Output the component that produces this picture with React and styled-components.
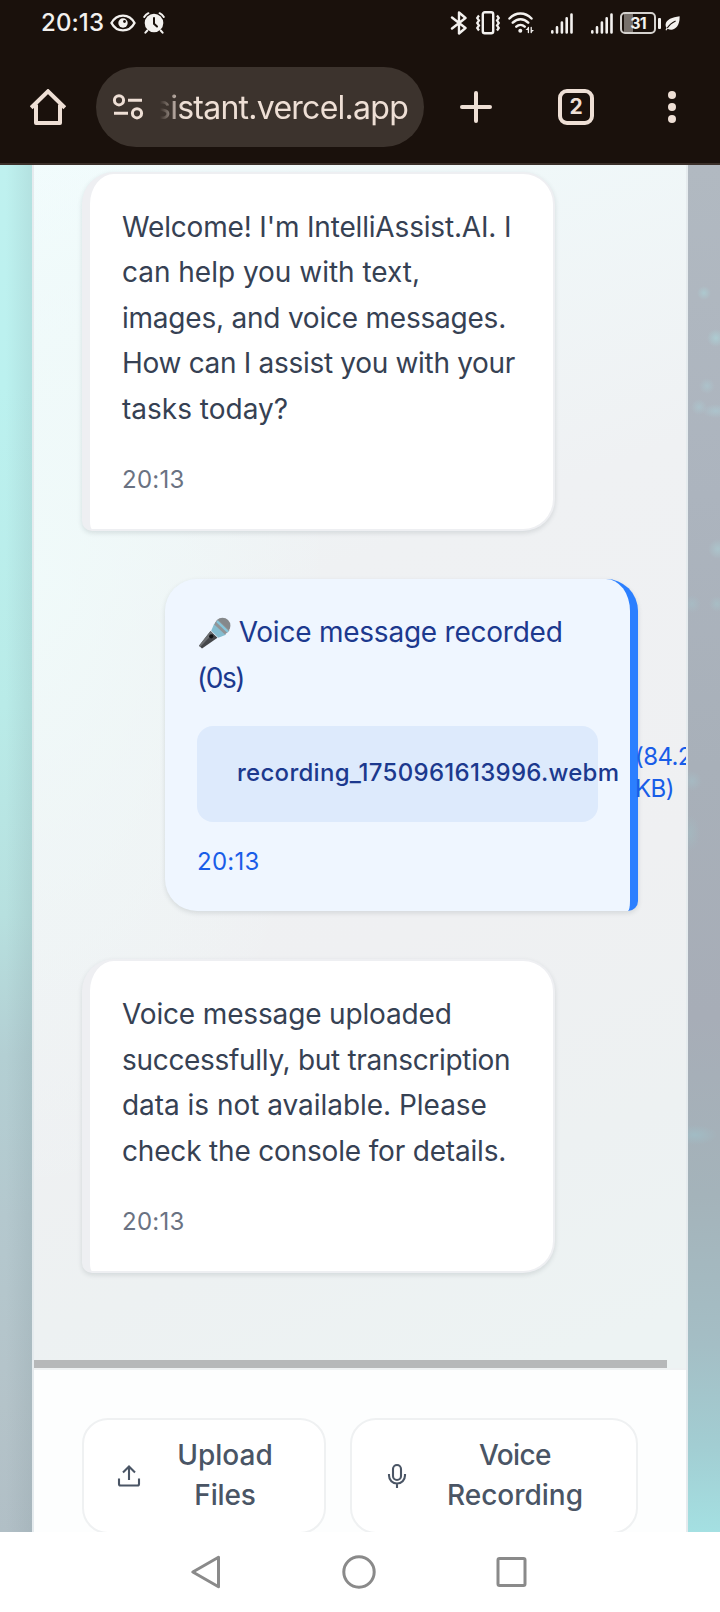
import React from 'react';
import styled, { createGlobalStyle } from 'styled-components';

const GlobalStyle = createGlobalStyle`
  * { box-sizing: border-box; }
  body { margin: 0; background: #fff; font-family: Inter, "Liberation Sans", sans-serif; }
  svg { display: block; flex: none; }
`;

const Phone = styled.div`
  width: 720px;
  height: 1612px;
  display: flex;
  flex-direction: column;
  overflow: hidden;
`;

/* System status bar */
const StatusBar = styled.header`
  height: 51px;
  flex: none;
  display: flex;
  align-items: flex-start;
  justify-content: space-between;
  padding: 10px 40px 0 41px;
  background: #1a110c;
  color: #f3f1ef;
`;
const StatusGroup = styled.div`
  display: flex;
  align-items: center;
  height: 26px;
  gap: ${p => p.$gap}px;
`;
const Clock = styled.span`
  font-size: 24px;
  line-height: 26px;
  font-weight: 500;
  letter-spacing: 0.1px;
  width: 62px;
  white-space: nowrap;
`;
const Battery = styled.div`
  width: 36px;
  height: 22px;
  border: 2px solid #d5d2cf;
  border-radius: 5px;
  margin-right: 2px;
  display: flex;
  align-items: center;
  justify-content: center;
  font-size: 16px;
  font-weight: 700;
  letter-spacing: -0.8px;
  line-height: 18px;
  background: linear-gradient(90deg, #1a110c 2px, #77706b 2px, #77706b 11px, #1a110c 11px);
`;
const BatteryWrap = styled.div`
  display: flex;
  align-items: center;
  margin-left: -11px;
  margin-right: -2px;
`;
const BatteryCap = styled.i`
  width: 3px;
  height: 11px;
  border-radius: 1px;
  background: #f3f1ef;
`;

/* Browser toolbar */
const Toolbar = styled.nav`
  height: 114px;
  flex: none;
  display: flex;
  align-items: center;
  padding: 0 34px 0 30px;
  background: #1a110c;
  border-bottom: 2px solid #3b302a;
  color: #eedfd5;
`;
const AddressPill = styled.div`
  width: 328px;
  height: 80px;
  margin: 0 36px 0 30px;
  padding: 0 16px 0 16px;
  border-radius: 40px;
  background: #3c332d;
  display: flex;
  align-items: center;
`;
const Address = styled.div`
  flex: 1;
  height: 48px;
  margin-left: 16px;
  display: flex;
  justify-content: flex-end;
  overflow: hidden;
  white-space: nowrap;
  font-size: 32px;
  line-height: 50px;
  letter-spacing: -0.74px;
  mask-image: linear-gradient(90deg, transparent 0, #000 22px);
`;
const TabCount = styled.div`
  width: 36px;
  height: 36px;
  margin: 0 74px 0 66px;
  border: 4px solid #eedfd5;
  border-radius: 9px;
  display: flex;
  align-items: center;
  justify-content: center;
  font-size: 21px;
  font-weight: 700;
  line-height: 28px;
`;

/* Web page */
const Page = styled.main`
  height: 1367px;
  flex: none;
  padding: 0 32px;
  overflow: hidden;
  background:
    radial-gradient(circle 7px at 704px 128px, rgba(172, 208, 213, .7), transparent),
    radial-gradient(circle 9px at 716px 173px, rgba(172, 213, 218, .7), transparent),
    radial-gradient(circle 8px at 707px 221px, rgba(172, 202, 210, .6), transparent),
    radial-gradient(circle 8px at 699px 242px, rgba(172, 202, 210, .6), transparent),
    radial-gradient(ellipse 14px 7px at 716px 246px, rgba(172, 205, 213, .6), transparent),
    radial-gradient(circle 10px at 718px 384px, rgba(172, 208, 213, .6), transparent),
    radial-gradient(circle 9px at 692px 439px, rgba(165, 195, 203, .5), transparent),
    radial-gradient(circle 8px at 717px 439px, rgba(165, 200, 206, .5), transparent),
    radial-gradient(circle 10px at 692px 616px, rgba(165, 195, 203, .5), transparent),
    radial-gradient(ellipse 10px 18px at 690px 668px, rgba(162, 190, 196, .5), transparent),
    radial-gradient(ellipse 22px 10px at 695px 970px, rgba(160, 192, 201, .7), transparent),
    linear-gradient(90deg, transparent 6px, rgba(110, 130, 135, .14) 32px, transparent 32px),
    linear-gradient(180deg, #bff1ef 0, #bbf1ef 220px, #b9ebe8 540px, #b7e0df 750px, #b3cfd3 890px, #b4c8ce 1050px, #b4c3c9 1240px, #b1bfc6 1367px) 0 0 / 360px 100% no-repeat,
    linear-gradient(180deg, #b1b9c1 0, #acb4be 330px, #a8b0b9 600px, #a7adb7 850px, #a4b3ba 1030px, #a4bec5 1180px, #a2cdd2 1280px, #a4e0e2 1367px) 360px 0 / 360px 100% no-repeat;
`;
const Panel = styled.section`
  width: 656px;
  height: 100%;
  border: solid #e5ebee;
  border-width: 0 2px;
  display: flex;
  flex-direction: column;
  overflow: hidden;
`;
const Conversation = styled.div`
  height: 1203px;
  flex: none;
  padding: 6.5px 48px 0;
  display: flex;
  flex-direction: column;
  gap: 48px;
  background:
    radial-gradient(ellipse 300px 620px at 0 420px, rgba(240, 252, 251, .8), transparent),
    linear-gradient(160deg, #f2fcfd 0, #f0f9fa 120px, #eff1f3 480px, #eff0f2 850px, #edf1f2 1100px, #edf3f3 1300px);
`;
const Bubble = styled.article`
  width: 473px;
  padding: 31px 32px 33px;
  box-shadow: 0 2px 5px rgba(30, 45, 55, .13);
`;
const BotBubble = styled(Bubble)`
  align-self: flex-start;
  border: 2px solid #eeeff2;
  border-left-width: 8px;
  border-radius: 32px 32px 32px 10px;
  background: #fff;
  color: #364153;
`;
const UserBubble = styled(Bubble)`
  align-self: flex-end;
  border-right: 8px solid #2b7fff;
  border-radius: 32px 32px 10px 32px;
  background: #eff6ff;
  color: #1c398e;
`;
const Line = styled.span`
  display: flex;
  align-items: center;
  height: 45.5px;
  font-size: 28px;
  line-height: 45.5px;
  white-space: pre;
  letter-spacing: ${p => p.$track || 0}px;
`;
const Time = styled.time`
  display: block;
  margin-top: ${p => (p.$user ? 24 : 32)}px;
  font-size: 24px;
  line-height: 32px;
  letter-spacing: 0.25px;
  color: ${p => (p.$user ? '#195de8' : '#6a7282')};
`;
const Attachment = styled.div`
  height: 96px;
  margin-top: 25px;
  padding: 15px 24px 17px 40px;
  border-radius: 16px;
  background: #ddeafc;
  display: flex;
  align-items: center;
  gap: 16px;
  white-space: nowrap;
`;
const FileName = styled.span`
  flex: none;
  width: 382px;
  font-size: 24px;
  font-weight: 500;
  line-height: 32px;
  letter-spacing: 0.28px;
`;
const FileSize = styled.span`
  flex: none;
  font-size: 24px;
  line-height: 32px;
  letter-spacing: -0.6px;
  color: #195de8;
`;
const ScrollTrack = styled.div`
  height: 8px;
  margin: auto -48px 0;
`;
const ScrollThumb = styled.div`
  width: 633px;
  height: 8px;
  background: #b6b8b9;
`;
const Composer = styled.div`
  flex: none;
  height: 180px;
  border-top: 2px solid #eef1f2;
  padding: 48px 48px 0;
  display: flex;
  gap: 24px;
  background: #fdfefe;
`;
const ActionButton = styled.button`
  width: ${p => p.$width}px;
  height: 116px;
  flex: none;
  margin: 0;
  padding: 0 32px 0 33px;
  border: 2px solid #eff1f2;
  border-radius: 26px;
  background: #fff;
  color: #4a5565;
  font: 500 28px/40px Inter, "Liberation Sans", sans-serif;
  display: flex;
  align-items: center;
`;
const ButtonLabel = styled.span`
  flex: 1;
  margin: 0 0 3px 17px;
  display: flex;
  flex-direction: column;
  align-items: center;
`;
const Word = styled.span`
  letter-spacing: ${p => p.$track || 0}px;
`;

const NavBar = styled.footer`
  height: 80px;
  flex: none;
  padding: 0 192px 0 190px;
  display: flex;
  align-items: center;
  justify-content: space-between;
  background: #fff;
`;

const EyeIcon = () => (
  <svg width="26" height="18" viewBox="0 0 26 18" fill="none">
    <path d="M1.5 9C4 4.2 8.3 1.6 13 1.6S22 4.2 24.5 9C22 13.8 17.7 16.4 13 16.4S4 13.8 1.5 9Z" stroke="#f3f1ef" strokeWidth="2.4" />
    <circle cx="13" cy="9" r="4.7" fill="#f3f1ef" />
    <circle cx="14.5" cy="7.5" r="1.4" fill="#1a110c" />
  </svg>
);
const AlarmIcon = () => (
  <svg width="22" height="22" viewBox="0 0 22 22" fill="none" strokeLinecap="round">
    <circle cx="11" cy="11" r="9.3" fill="#f3f1ef" />
    <path d="M1.2 5A9 9 0 0 1 5.4 1.2M20.8 5A9 9 0 0 0 16.6 1.2M4.3 18.5 2.4 20.7M17.7 18.5l1.9 2.2" stroke="#f3f1ef" strokeWidth="2" />
    <path d="M11 6v5.8l3 2.7" stroke="#1a110c" strokeWidth="2" />
  </svg>
);
const BluetoothIcon = () => (
  <svg width="18" height="24" viewBox="0 0 18 24" fill="none" stroke="#f3f1ef" strokeWidth="2.4" strokeLinejoin="round" strokeLinecap="round">
    <path d="M2 6.5 15.5 17 9 22.5v-21L15.5 7 2 17.5" />
  </svg>
);
const VibrateIcon = () => (
  <svg width="26" height="24" viewBox="0 0 26 24" fill="none" stroke="#f3f1ef" strokeWidth="2">
    <rect x="7.8" y="1.3" width="10.4" height="21" rx="2" strokeWidth="2.4" />
    <path d="M4 4.5 2.2 7 4 9.5 2.2 12 4 14.5 2.2 17 4 19.500M22 4.500 23.800 7 22 9.500l1.800 2.500-1.800 2.500 1.800 2.500-1.800 2.500" strokeWidth="2.2" />
  </svg>
);
const WifiIcon = () => (
  <svg width="26" height="24" viewBox="0 0 26 24" fill="none" stroke="#f3f1ef" strokeWidth="2.500" strokeLinecap="round">
    <path d="M1.500 7.500c6.300-6.600 15.600-6.600 22 0M4.800 11.700c4.600-4.600 11-4.600 15.400 0M8.300 15.600c2.400-2.200 6-2.200 8.400 0" />
    <circle cx="12.300" cy="19.800" r="2" fill="#f3f1ef" stroke="none" />
    <path d="M20.400 16.500v5M23.200 16.500v5" strokeWidth="1.300" />
    <path d="m17.500 19 2.900-2.700v2.700zM26 19l-2.800 2.700V19z" fill="#f3f1ef" stroke="none" />
  </svg>
);
const SignalIcon = () => (
  <svg width="22" height="21" viewBox="0 0 22 21" fill="none" stroke="#f3f1ef" strokeWidth="2.600" strokeLinecap="round">
    <path d="M1.300 18.400v1M6 14.400v5M10.900 9.600v9.800M15.700 5.400v14M20.500 1.600v17.800" />
  </svg>
);
const LeafIcon = () => (
  <svg width="15" height="15" viewBox="0 0 15 15">
    <path d="M14.6.2C7.5 1.4 1 3.2.6 8.6.5 10 .8 11 1.5 11.8L.5 14l.9.4 1.2-1.7c6.1 3.2 12.6-2 12-12.5Z" fill="#f3f1ef" />
    <path d="M2.3 12C4.3 8.7 6.8 6.9 10.6 5" stroke="#1a110c" strokeWidth="1.1" fill="none" />
  </svg>
);
const HomeIcon = () => (
  <svg width="36" height="36" viewBox="0 0 36 36" fill="none" stroke="#eedfd5" strokeWidth="4" strokeLinejoin="round">
    <path d="M1.2 18.7 18 2.3l16.8 16.4" strokeLinejoin="miter" />
    <path d="M6 15.5V34h24V15.5" />
  </svg>
);
const TuneIcon = () => (
  <svg width="32" height="26" viewBox="0 0 32 26" fill="none" stroke="#eedfd5" strokeWidth="3">
    <circle cx="7" cy="6.3" r="4.6" />
    <circle cx="25" cy="19.3" r="4.6" />
    <path d="M16 6.3h14M2 19.3h14" />
  </svg>
);
const PlusIcon = () => (
  <svg width="32" height="32" viewBox="0 0 32 32" stroke="#eedfd5" strokeWidth="4" strokeLinecap="round">
    <path d="M16 2v28M2 16h28" />
  </svg>
);
const MoreIcon = () => (
  <svg width="8" height="32" viewBox="0 0 8 32" fill="#eedfd5">
    <circle cx="4" cy="4" r="4" />
    <circle cx="4" cy="16" r="4" />
    <circle cx="4" cy="28" r="4" />
  </svg>
);
const MicrophonePicture = () => (
  <svg width="34" height="34" viewBox="0 0 34 34">
    <path d="m13.5 15 7 6.8L5 32.5l-3-2.7z" fill="#45474a" />
    <path d="m13.5 15 2.5 2.4L3.2 31 2 29.8z" fill="#6d6f72" />
    <circle cx="25.5" cy="9.7" r="7.9" fill="#85888b" />
    <path d="M14.200 14.800 17.300 7.500 29 18.700l-7.600 3z" fill="#85bdd0" />
    <path d="m17.300 8.500 3.700-5 11.500 11-4.500 3.900z" fill="#919497" />
    <path d="m20.600 4.300 11.200 10.800-1.500 1.700L19.100 6.100z" fill="#86c5da" />
    <circle cx="14.2" cy="20.3" r="2.1" fill="#101112" />
  </svg>
);
const UploadIcon = () => (
  <svg width="24" height="24" viewBox="0 0 24 24" fill="none" stroke="#4a5565" strokeWidth="2.1">
    <path d="M12 16V2.5M6 8.4l6-6 6 6M2 14.5V20a1.5 1.5 0 0 0 1.5 1.5h17A1.5 1.5 0 0 0 22 20v-5.5" />
  </svg>
);
const MicIcon = () => (
  <svg width="24" height="26" viewBox="0 0 24 26" fill="none" stroke="#4a5565" strokeWidth="2.1">
    <rect x="8" y="2" width="8" height="15" rx="4" />
    <path d="M4 11v1.5a8 8 0 0 0 16 0V11M12 20.500V25" />
  </svg>
);
const BackIcon = () => (
  <svg width="32" height="36" viewBox="0 0 32 36" fill="none" stroke="#8a8a8a" strokeWidth="3" strokeLinejoin="round">
    <path d="M28.5 3.3v29.4L2.8 18z" />
  </svg>
);
const CircleIcon = () => (
  <svg width="36" height="36" viewBox="0 0 36 36" fill="none" stroke="#8a8a8a" strokeWidth="3">
    <circle cx="18" cy="18" r="15.2" />
  </svg>
);
const SquareIcon = () => (
  <svg width="32" height="32" viewBox="0 0 32 32" fill="none" stroke="#8a8a8a" strokeWidth="3">
    <rect x="2" y="2.5" width="27" height="27" rx="1.5" />
  </svg>
);

export default function App() {
  return (
    <Phone>
      <GlobalStyle />
      <StatusBar>
        <StatusGroup $gap={7}>
          <Clock>20:13</Clock>
          <EyeIcon />
          <AlarmIcon />
        </StatusGroup>
        <StatusGroup $gap={17}>
          <StatusGroup $gap={7}>
            <BluetoothIcon />
            <VibrateIcon />
            <WifiIcon />
          </StatusGroup>
          <StatusGroup $gap={18}>
            <SignalIcon />
            <SignalIcon />
            <BatteryWrap>
              <Battery>31</Battery>
              <BatteryCap />
            </BatteryWrap>
            <StatusGroup $gap={0}><BatteryLeaf><LeafIcon /></BatteryLeaf></StatusGroup>
          </StatusGroup>
        </StatusGroup>
      </StatusBar>

      <Toolbar>
        <HomeIcon />
        <AddressPill>
          <TuneIcon />
          <Address>ssistant.vercel.app</Address>
        </AddressPill>
        <PlusIcon />
        <TabCount>2</TabCount>
        <MoreIcon />
      </Toolbar>

      <Page>
        <Panel>
          <Conversation>
            <BotBubble>
              <Line $track={-0.17}>Welcome! I'm IntelliAssist.AI. I</Line>
              <Line $track={-0.02}>can help you with text,</Line>
              <Line $track={-0.22}>images, and voice messages.</Line>
              <Line $track={-0.31}>How can I assist you with your</Line>
              <Line>tasks today?</Line>
              <Time>20:13</Time>
            </BotBubble>
            <UserBubble>
              <Line $track={-0.23}><MicrophonePicture /> Voice message recorded</Line>
              <Line $track={-1.5}>(0s)</Line>
              <Attachment>
                <FileName>recording_1750961613996.webm</FileName>
                <FileSize>(84.2<br />KB)</FileSize>
              </Attachment>
              <Time $user>20:13</Time>
            </UserBubble>
            <BotBubble>
              <Line $track={-0.15}>Voice message uploaded</Line>
              <Line $track={-0.31}>successfully, but transcription</Line>
              <Line $track={-0.03}>data is not available. Please</Line>
              <Line $track={-0.18}>check the console for details.</Line>
              <Time>20:13</Time>
            </BotBubble>
            <ScrollTrack><ScrollThumb /></ScrollTrack>
          </Conversation>
          <Composer>
            <ActionButton $width={244}>
              <UploadIcon />
              <ButtonLabel>
                <Word>Upload</Word>
                <Word $track={-0.15}>Files</Word>
              </ButtonLabel>
            </ActionButton>
            <ActionButton $width={288}>
              <MicIcon />
              <ButtonLabel>
                <Word $track={-0.6}>Voice</Word>
                <Word>Recording</Word>
              </ButtonLabel>
            </ActionButton>
          </Composer>
        </Panel>
      </Page>

      <NavBar>
        <BackIcon />
        <CircleIcon />
        <SquareIcon />
      </NavBar>
    </Phone>
  );
}

const BatteryLeaf = styled.span`
  margin-left: -12px;
`;
